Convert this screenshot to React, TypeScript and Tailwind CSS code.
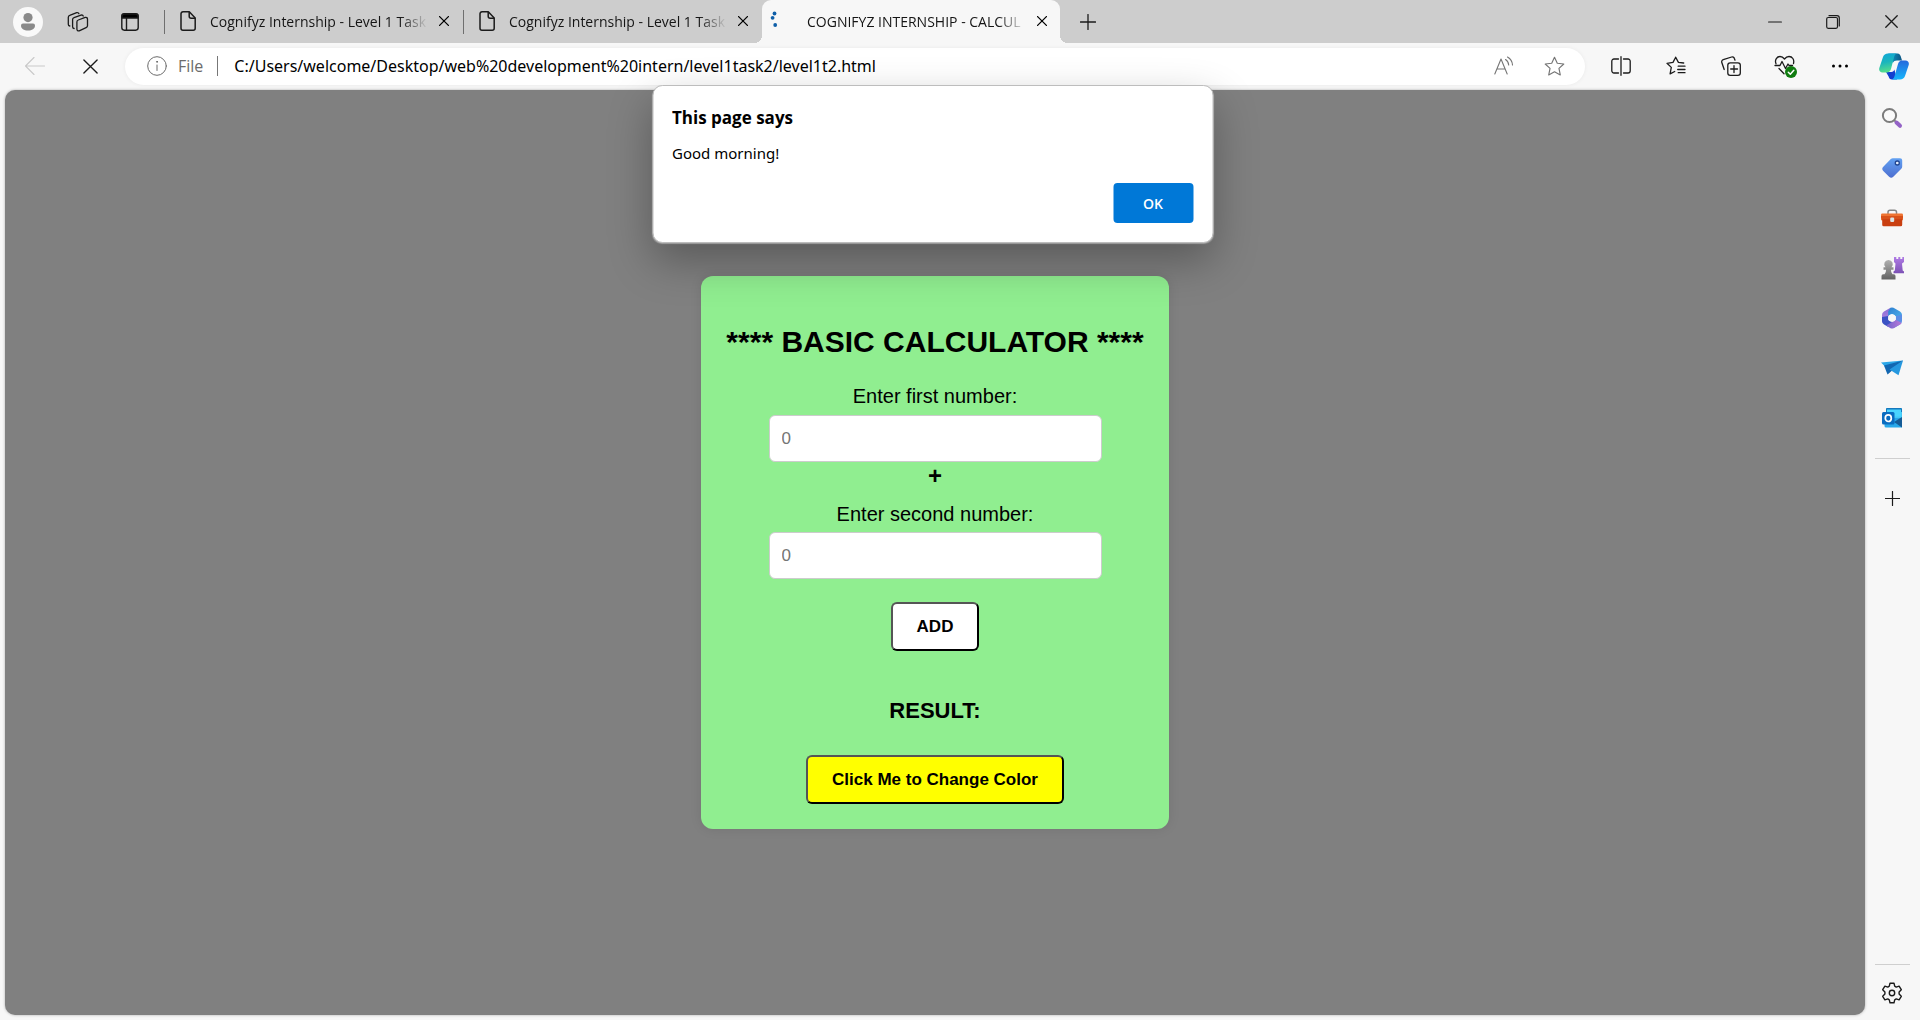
import type { ReactNode } from "react";

type IconProps = { size?: number; box?: string; sw?: number; className?: string; children: ReactNode };

function Icon({ size = 20, box = "0 0 20 20", sw = 1, className, children }: IconProps) {
  return (
    <svg
      width={size}
      height={size}
      viewBox={box}
      fill="none"
      stroke="currentColor"
      strokeWidth={sw}
      strokeLinecap="round"
      strokeLinejoin="round"
      className={className}
      aria-hidden="true"
    >
      {children}
    </svg>
  );
}

const Cross = ({ size = 10, sw = 1.3 }: { size?: number; sw?: number }) => (
  <Icon size={size} box="0 0 10 10" sw={sw}>
    <path d="M.6.6l8.8 8.8M9.4.6L.6 9.4" />
  </Icon>
);

const PageIcon = () => (
  <svg width="16" height="20" viewBox="0 0 16 20" fill="none" stroke="#1b1b1b" strokeWidth="1.5" strokeLinejoin="round" aria-hidden="true">
    <path d="M3 .8h6.3L15.2 7v10.2a2 2 0 0 1-2 2H3a2 2 0 0 1-2-2V2.800a2 2 0 0 1 2-2z" />
    <path d="M9.200 1v4.200a2 2 0 0 0 2 2h4" />
  </svg>
);

const StarPath = "M10 1.200l2.650 5.700 6.200.75-4.600 4.200 1.250 6.150L10 15l-5.500 3 1.250-6.150-4.600-4.200 6.200-.75z";

function Tab({ title, active = false }: { title: string; active?: boolean }) {
  return (
    <div
      role="tab"
      aria-selected={active}
      className={
        active
          ? "relative flex h-full w-[298px] items-center rounded-t-[9px] bg-[#f7f7f7] pr-[10px] pb-px pl-2"
          : "flex h-full w-[298px] items-center pr-[11px] pb-px pl-[15px]"
      }
    >
      {active && (
        <>
          <span className="absolute bottom-0 -left-2 size-2 bg-[radial-gradient(circle_at_0_0,#cdcdcd_8px,#f7f7f7_8px)]" />
          <span className="absolute -right-2 bottom-0 size-2 bg-[radial-gradient(circle_at_100%_0,#cdcdcd_8px,#f7f7f7_8px)]" />
        </>
      )}
      {active ? (
        <svg width="20" height="20" viewBox="0 0 20 20" fill="#0f5fa8" className="mr-[17px]" aria-hidden="true">
          <circle cx="4.500" cy="2.500" r="1.900" />
          <circle cx="2.600" cy="6.800" r="1.900" />
          <circle cx="5.200" cy="14" r="1.900" />
        </svg>
      ) : (
        <span className="mr-[14px]">
          <PageIcon />
        </span>
      )}
      <span className="min-w-0 flex-1 overflow-hidden text-[14px] whitespace-nowrap text-[#151515] [mask-image:linear-gradient(to_right,black_calc(100%-28px),transparent)]">
        {title}
      </span>
      <button type="button" aria-label="Close tab" className="ml-2 flex size-4 items-center justify-center text-black">
        <Cross />
      </button>
    </div>
  );
}

function TitleBar() {
  return (
    <div className="flex h-[43px] shrink-0 items-center bg-[#cdcdcd]">
      <div className="flex w-[164px] items-center pl-[13px] text-[#1b1b1b]">
        <button type="button" aria-label="Profile" className="flex size-[30px] items-center justify-center rounded-full bg-[#f9f9f9]">
          <svg width="16" height="18" viewBox="0 0 16 18" fill="#8a8a8a" aria-hidden="true">
            <circle cx="8" cy="4.600" r="4.600" />
            <path d="M3 10.500h10a2 2 0 0 1 2 2c0 3.200-3 5-7 5s-7-1.800-7-5a2 2 0 0 1 2-2z" />
          </svg>
        </button>
        <button type="button" aria-label="Workspaces" className="ml-6">
          <Icon size={22} box="0 0 22 22" sw={1.3}>
            <path d="M11.300 9l6.900-2.600a1.700 1.700 0 0 1 2.300 1.600v6.700a2.200 2.200 0 0 1-1.400 2L12.200 19.800a1.700 1.700 0 0 1-2.300-1.600v-7.200a2 2 0 0 1 1.400-2z" />
            <path d="M7.100 17.500a1.700 1.700 0 0 1-1.500-1.700V8.600a2 2 0 0 1 1.400-1.900l7-2.600a1.700 1.700 0 0 1 2.200 1" />
            <path d="M2.800 15a1.700 1.700 0 0 1-1.500-1.700V6.200a2 2 0 0 1 1.400-1.900l7-2.600a1.700 1.700 0 0 1 2.200 1" />
          </Icon>
        </button>
        <button type="button" aria-label="Tab actions" className="ml-[31px]">
          <Icon size={20} sw={1.4}>
            <rect x="1.800" y="1.800" width="16.400" height="16.400" rx="2.600" />
            <path d="M2 4.500A2.500 2.500 0 0 1 4.500 2h11A2.500 2.500 0 0 1 18 4.500V6H2z" fill="#000" />
            <path d="M6.500 6v12" />
          </Icon>
        </button>
      </div>
      <span className="h-6 w-px bg-[#6f6f6f]" />
      <div role="tablist" className="flex h-full items-center">
        <Tab title="Cognifyz Internship - Level 1 Task" />
        <span className="h-6 w-px bg-[#6f6f6f]" />
        <Tab title="Cognifyz Internship - Level 1 Task" />
        <Tab title="COGNIFYZ INTERNSHIP - CALCUL" active />
      </div>
      <button type="button" aria-label="New tab" className="ml-5 text-[#1b1b1b]">
        <Icon size={16} box="0 0 16 16" sw={1.3}>
          <path d="M8 .5v15M.5 8h15" />
        </Icon>
      </button>
      <div className="ml-auto flex h-full text-[#1b1b1b]">
        <button type="button" aria-label="Minimize" className="flex w-[58px] items-center justify-center">
          <Icon size={14} box="0 0 14 14" sw={1.2}>
            <path d="M.6 7h12.800" />
          </Icon>
        </button>
        <button type="button" aria-label="Restore" className="flex w-[58px] items-center justify-center">
          <Icon size={14} box="0 0 14 14" sw={1.2}>
            <rect x=".7" y="2.500" width="10.800" height="10.800" rx="1.500" />
            <path d="M3 .7h8a2.300 2.300 0 0 1 2.300 2.300v8" />
          </Icon>
        </button>
        <button type="button" aria-label="Close" className="flex w-[58px] items-center justify-center">
          <Cross size={13} sw={1} />
        </button>
      </div>
    </div>
  );
}

const toolButton = "flex w-[55px] items-center justify-center";

function Toolbar() {
  return (
    <div className="flex h-[47px] shrink-0 items-center pb-px text-[#1b1b1b]">
      <button type="button" aria-label="Back" disabled className="flex w-[70px] justify-center text-[#c9c9c9]">
        <Icon sw={1.1}>
          <path d="M.5 10h19M9 1.500L.5 10 9 18.500" />
        </Icon>
      </button>
      <button type="button" aria-label="Stop loading" className="flex w-10 justify-center">
        <Cross size={15} sw={0.9} />
      </button>
      <div className="ml-[15px] flex h-[37px] min-w-0 flex-1 items-center rounded-full bg-white pr-5 pl-[22px] shadow-[0_0_4px_rgba(0,0,0,0.06)]">
        <Icon className="text-[#6b6b6b]">
          <circle cx="10" cy="10" r="9.300" />
          <path d="M10 9v5.500" />
          <circle cx="10" cy="5.800" r=".5" fill="currentColor" />
        </Icon>
        <span className="ml-[11px] text-[16px] text-[#6b6b6b]">File</span>
        <span className="mr-4 ml-[14px] h-5 w-px bg-[#777]" />
        <input
          aria-label="Address"
          className="min-w-0 flex-1 bg-transparent font-['Noto_Sans',sans-serif] text-[16px] text-black outline-none"
          defaultValue="C:/Users/welcome/Desktop/web%20development%20intern/level1task2/level1t2.html"
        />
        <button type="button" aria-label="Read aloud" className="text-[#757575]">
          <Icon sw={1.1}>
            <path d="M.8 18L7 3l6.200 15M3 13h8M11.500 3.500c2 1.200 3 3 3.200 5.500M13.500 1c3 1.700 4.800 4.500 5 8" />
          </Icon>
        </button>
        <button type="button" aria-label="Add to favorites" className="ml-[30px] text-[#757575]">
          <Icon size={21} sw={1.1}>
            <path d={StarPath} />
          </Icon>
        </button>
      </div>
      <div className="ml-2 flex items-center">
        <button type="button" aria-label="Split screen" className={toolButton}>
          <Icon sw={1.300}>
            <path d="M7.500 3H3a2.200 2.200 0 0 0-2.200 2.200v9.600A2.200 2.200 0 0 0 3 17h4.500M12.500 3H17a2.200 2.200 0 0 1 2.200 2.200v9.600A2.200 2.200 0 0 1 17 17h-4.500M10 .7v18.600" />
          </Icon>
        </button>
        <button type="button" aria-label="Favorites" className={toolButton}>
          <Icon sw={1.300}>
            <path d="M17.700 7l-5.300-.6L9.700 1.200 7 6.400l-6 .9 4.300 4.100-1.200 6.500 4.600-2.400M12.200 10.200H19M11.700 13.500H19M12.200 16.700H19" />
          </Icon>
        </button>
        <button type="button" aria-label="Collections" className={toolButton}>
          <Icon sw={1.300}>
            <rect x="6.800" y="6.800" width="12.500" height="12.500" rx="2.400" />
            <path d="M13 9.700v6.800M9.700 13h6.800M14 4.200l-.6-1.700A2.200 2.200 0 0 0 10.600 1L2.300 3.700A2.200 2.200 0 0 0 .8 6.500l2.400 7" />
          </Icon>
        </button>
        <button type="button" aria-label="Browser essentials" className={toolButton}>
          <Icon size={23} box="0 0 23 23" sw={1.300}>
            <path d="M2 8.800C.3 4.500 3.200 1.500 6 1.500c2 0 3.300 1 4.500 2.500C11.700 2.500 13 1.500 15 1.500c3.300 0 5.500 3 4.500 7M1 10.500h5l2-4 3.500 7 2.500-4.500 1 1.500h3.500M5 13.500l5 5.300" />
            <circle cx="17" cy="17" r="6" fill="#107c10" stroke="none" />
            <path d="M14.300 17.200l2 2 3.500-4" stroke="#fff" strokeWidth="1.500" />
          </Icon>
        </button>
        <button type="button" aria-label="Settings and more" className="flex w-[54px] items-center justify-center">
          <svg width="18" height="4" viewBox="0 0 18 4" aria-hidden="true">
            <circle cx="2.500" cy="2" r="1.500" />
            <circle cx="9" cy="2" r="1.500" />
            <circle cx="15.500" cy="2" r="1.500" />
          </svg>
        </button>
        <button type="button" aria-label="Copilot" className="flex w-[53px] items-center justify-center">
          <svg width="30" height="27" viewBox="0 0 30 27" aria-hidden="true">
            <defs>
              <linearGradient id="cpA" x1="0" y1="0" x2=".2" y2="1">
                <stop offset="0" stopColor="#0fa5d8" />
                <stop offset=".5" stopColor="#1bb5bd" />
                <stop offset="1" stopColor="#55dd8c" />
              </linearGradient>
              <linearGradient id="cpB" x1="0" y1="0" x2="0" y2="1">
                <stop offset="0" stopColor="#2669dc" />
                <stop offset="1" stopColor="#16b5fb" />
              </linearGradient>
              <linearGradient id="cpC" x1="0" y1="0" x2="1" y2="0">
                <stop offset="0" stopColor="#0da3d0" />
                <stop offset="1" stopColor="#0e5482" />
              </linearGradient>
            </defs>
            <path d="M9 .500h9.500c2 0 2.800 1.500 3.300 3l1.200 4h-5c-2 0-3.500.8-4.200 2.500L11 2z" fill="url(#cpC)" />
            <path d="M7 19h5.500c1.500 0 2.500-1 2.900-2.500l2.600 10h-5c-2 0-2.900-1.200-3.400-3z" fill="#123fd0" />
            <path d="M9 .500h9.500c-2 0-2.800 1.500-3.400 3.500L12 16c-.7 2-2 3.500-4 3.500H3.500c-2.500 0-3.900-2-3.200-4.500L4 4C4.800 1.800 6.500.500 9 .500z" fill="url(#cpA)" />
            <path d="M21 26.500h-9c2 0 3-1.500 3.600-3.500L19 11c.7-2 2-3.500 4-3.500h3.500c2.500 0 3.900 2 3.200 4.500L26 23c-.8 2.200-2.500 3.500-5 3.500z" fill="url(#cpB)" />
          </svg>
        </button>
      </div>
    </div>
  );
}

function SideArt({ name }: { name: string }) {
  switch (name) {
    case "Search":
      return (
        <svg width="22" height="22" viewBox="0 0 22 22" fill="none" aria-hidden="true">
          <path d="M12.500 12.500l3 3" stroke="#8a8a8a" strokeWidth="2" />
          <circle cx="8.500" cy="8.500" r="6.600" stroke="#7c7c7c" strokeWidth="2" fill="#fafafa" />
          <path d="M15.500 15.500l3.500 3.300" stroke="#9463c6" strokeWidth="4" strokeLinecap="round" />
        </svg>
      );
    case "Shopping":
      return (
        <svg width="22" height="22" viewBox="0 0 22 22" fill="none" aria-hidden="true">
          <defs>
            <linearGradient id="tag" x1="0" y1="0" x2="0" y2="1">
              <stop stopColor="#62a1f2" />
              <stop offset="1" stopColor="#4e6fd0" />
            </linearGradient>
          </defs>
          <path d="M12 1.200h7A2.200 2.200 0 0 1 21.200 3.300v6.200a3 3 0 0 1-.9 2.200l-8 8a3 3 0 0 1-4.200 0l-5.800-5.700a3 3 0 0 1 0-4.200L9.800 2.100A3 3 0 0 1 12 1.200z" fill="url(#tag)" />
          <circle cx="16.300" cy="6" r="2" fill="#e6f1ff" stroke="#22458f" strokeWidth="1.300" />
        </svg>
      );
    case "Tools":
      return (
        <svg width="22" height="18" viewBox="0 0 22 18" fill="none" aria-hidden="true">
          <path d="M7 6V3.200A2 2 0 0 1 9 1.200h4.500a2 2 0 0 1 2 2V6" stroke="#868686" strokeWidth="1.500" />
          <rect y="4.500" width="22" height="7" rx="1.200" fill="#ee7331" />
          <path d="M1.200 8.500h20v7.200a1.500 1.500 0 0 1-1.500 1.500h-17a1.500 1.500 0 0 1-1.500-1.500z" fill="#c93f10" />
          <path d="M0 7h22v1.200a2 2 0 0 1-2 2H2a2 2 0 0 1-2-2z" fill="#d85119" />
          <rect x="9.200" y="8.500" width="4" height="4.500" rx="1.200" fill="#dce3e3" />
        </svg>
      );
    case "Games":
      return (
        <svg width="23" height="23" viewBox="0 0 23 23" aria-hidden="true">
          <defs>
            <linearGradient id="pawn" x1="0" y1="0" x2="0" y2="1">
              <stop stopColor="#b0b0b0" />
              <stop offset="1" stopColor="#636363" />
            </linearGradient>
            <linearGradient id="rook" x1="0" y1="0" x2="0" y2="1">
              <stop stopColor="#b07be5" />
              <stop offset="1" stopColor="#7c51b5" />
            </linearGradient>
          </defs>
          <path d="M13 0h2.300v2h2V0h2v2h2V0H23v5l-2 1.500.7 7 1.300 1v1.800H12.500v-1.800l1.300-1 .7-7L13 5z" fill="url(#rook)" />
          <path d="M7.500 3a4.200 4.200 0 0 1 3 7.200h2v2.500H10c0 2 .5 3.300 1.500 4.500h1.300a1.700 1.700 0 0 1 1.700 1.700v3.600H.5v-3.600a1.700 1.700 0 0 1 1.700-1.700h1.300C4.500 16 5 14.700 5 12.700H2.500v-2.500h2A4.200 4.200 0 0 1 7.500 3z" fill="url(#pawn)" />
        </svg>
      );
    case "Microsoft 365":
      return (
        <svg width="22" height="22" viewBox="0 0 22 22" aria-hidden="true">
          <defs>
            <linearGradient id="m365a" x1="0" y1="0" x2="0" y2="1">
              <stop stopColor="#8a6bd6" />
              <stop offset="1" stopColor="#b388e0" />
            </linearGradient>
            <linearGradient id="m365b" x1="0" y1="0" x2="1" y2="1">
              <stop stopColor="#2d7fd0" />
              <stop offset="1" stopColor="#4fb4ee" />
            </linearGradient>
            <linearGradient id="m365c" x1="0" y1="0" x2="1" y2="0">
              <stop stopColor="#6d63cf" />
              <stop offset="1" stopColor="#b878d6" />
            </linearGradient>
          </defs>
          <path d="M9.500.800L3 4.500Q1 5.700 1 8v7.500L7.200 13V9l4.500-3.500z" fill="url(#m365a)" />
          <path d="M9.500.800q1.500-.8 3 0L19 4.500q2 1.200 2 3.500v6l-6.200-4.800L11 7 7.200 9V4.500z" fill="url(#m365b)" />
          <path d="M21 7.500V14q0 2.300-2 3.500l-6.500 3.700-2-5.700 4.300-2.500V9.200z" fill="#5a8de6" />
          <path d="M1 10v4q0 2.300 2 3.500l4 2.200 4.500-4.700-4.300-2V9z" fill="#3b52c4" />
          <path d="M5 18.600l6-3.600 4-2.200 5.500 3.200q-.5 1-1.500 1.500l-6.500 3.700q-1.500.8-3 0z" fill="url(#m365c)" />
          <circle cx="11" cy="11" r="3.800" fill="#f7f7f7" />
        </svg>
      );
    case "Drop":
      return (
        <svg width="22" height="16" viewBox="0 0 22 16" aria-hidden="true">
          <path d="M0 2.500L22 .5 6.500 9z" fill="#2aa7e8" />
          <path d="M3 5.500L22 .5 6.500 14.500z" fill="#1267b1" />
          <path d="M6.500 14.500L22 .5 10 11z" fill="#0b4a87" />
          <path d="M8.500 9.500L22 .5l-4.500 14.800z" fill="#2598df" />
        </svg>
      );
    default:
      return (
        <svg width="22" height="22" viewBox="0 0 22 22" aria-hidden="true">
          <rect x="5" y="1" width="16" height="14" rx="1.200" fill="#43c8f5" />
          <path d="M5 1.800A1.200 1.200 0 0 1 6.200 1h13.600a1.200 1.200 0 0 1 1.200 1.200V5H5z" fill="#1678bd" />
          <path d="M6 2.500h14v7H6z" fill="#49d5ff" />
          <path d="M3.500 11H21v9.500H5a1.500 1.500 0 0 1-1.500-1.500z" fill="#28a8ea" />
          <path d="M13 15l8-5v10.500z" fill="#155b96" />
          <rect x="1" y="5" width="12.500" height="12.500" rx="1.500" fill="#0a6cc0" />
          <ellipse cx="7.300" cy="11.200" rx="3" ry="3.300" fill="none" stroke="#fff" strokeWidth="1.700" />
        </svg>
      );
  }
}

const apps = ["Search", "Shopping", "Tools", "Games", "Microsoft 365", "Drop", "Outlook"];

function Sidebar() {
  return (
    <aside className="flex w-[55px] shrink-0 flex-col items-center pt-[3px] pr-px text-[#1b1b1b]">
      {apps.map((name) => (
        <button key={name} type="button" aria-label={name} className="flex h-[50px] w-full items-center justify-center">
          <SideArt name={name} />
        </button>
      ))}
      <hr className="mt-[15px] w-[35px] border-[#cfcfcf]" />
      <button type="button" aria-label="Customize" className="mt-8">
        <Icon size={15} box="0 0 15 15" sw={1.200}>
          <path d="M7.500.5v14M.5 7.500h14" />
        </Icon>
      </button>
      <hr className="mt-auto w-[35px] border-[#cfcfcf]" />
      <button type="button" aria-label="Sidebar settings" className="mt-[17px] mb-4">
        <Icon size={22} box="0 0 22 22" sw={1.400}>
          <circle cx="11" cy="11" r="2.700" />
          <path d="M9 1.200h4l.7 3 1.500.9 2.900-1 2.200 3.600-2.200 2.200v2.200l2.200 2.200-2.200 3.600-2.900-1-1.500.9-.7 3H9l-.7-3-1.500-.9-2.900 1-2.200-3.600 2.200-2.200V9.900L1.700 7.700l2.200-3.600 2.900 1 1.500-.9z" />
        </Icon>
      </button>
    </aside>
  );
}

const inputStyle =
  "h-[47px] w-[333px] rounded-[6px] border border-[#ccc] bg-white px-3 text-[17px] text-black placeholder:text-[#757575]";
const pushStyle =
  "h-[49px] rounded-[6px] border-2 border-t-[#555] border-r-black border-b-black border-l-[#555] px-6 text-[17px] font-bold";

function Calculator() {
  return (
    <form
      className="flex w-[468px] flex-col items-center rounded-[12px] bg-[#90ee90] px-6 pt-12 pb-[25px] font-['Liberation_Sans',Arial,sans-serif] text-black shadow-[0_0_12px_rgba(0,0,0,0.1)]"
      onSubmit={(e) => e.preventDefault()}
    >
      <h1 className="text-[30px] leading-9 font-bold whitespace-nowrap">**** BASIC CALCULATOR ****</h1>
      <label htmlFor="first" className="mt-6 text-[20px] leading-6">
        Enter first number:
      </label>
      <input id="first" type="number" placeholder="0" className={`${inputStyle} mt-[7px]`} />
      <span className="text-[24px] leading-7 font-bold">+</span>
      <label htmlFor="second" className="mt-3 text-[20px] leading-6">
        Enter second number:
      </label>
      <input id="second" type="number" placeholder="0" className={`${inputStyle} mt-[6px]`} />
      <button type="submit" className={`${pushStyle} mt-[23px] bg-white`}>
        ADD
      </button>
      <h3 className="mt-[46px] text-[22px] leading-7 font-bold">RESULT:</h3>
      <button type="button" className={`${pushStyle} mt-[30px] bg-[#ffff00]`}>
        Click Me to Change Color
      </button>
    </form>
  );
}

function Alert() {
  return (
    <div
      role="alertdialog"
      aria-labelledby="alert-title"
      aria-describedby="alert-text"
      className="absolute top-[-5px] left-1/2 w-[561px] -translate-x-1/2 rounded-[10px] border border-[#bdbdbd] bg-white p-[19px] text-black shadow-[0_1px_1px_#a0a0a0,0_18px_44px_rgba(0,0,0,0.3)]"
    >
      <h2 id="alert-title" className="text-[17px] leading-[26px] font-bold">
        This page says
      </h2>
      <p id="alert-text" className="mt-[10px] font-['Noto_Sans',sans-serif] text-[15px] leading-6">
        Good morning!
      </p>
      <div className="mt-[18px] flex justify-end">
        <button type="button" className="h-10 w-20 rounded-[4px] bg-[#0078d7] text-[14px] font-semibold text-white">
          OK
        </button>
      </div>
    </div>
  );
}

export default function App() {
  return (
    <div className="flex h-screen flex-col overflow-hidden bg-[#f7f7f7] font-['Open_Sans','Noto_Sans',sans-serif]">
      <TitleBar />
      <Toolbar />
      <div className="flex min-h-0 flex-1">
        <div className="relative flex min-w-0 flex-1 pb-[5px] pl-[5px]">
          <main className="flex flex-1 items-center justify-center rounded-[10px] bg-[#808080] shadow-[0_0_3px_rgba(0,0,0,0.3)]">
            <Calculator />
          </main>
          <Alert />
        </div>
        <Sidebar />
      </div>
    </div>
  );
}
